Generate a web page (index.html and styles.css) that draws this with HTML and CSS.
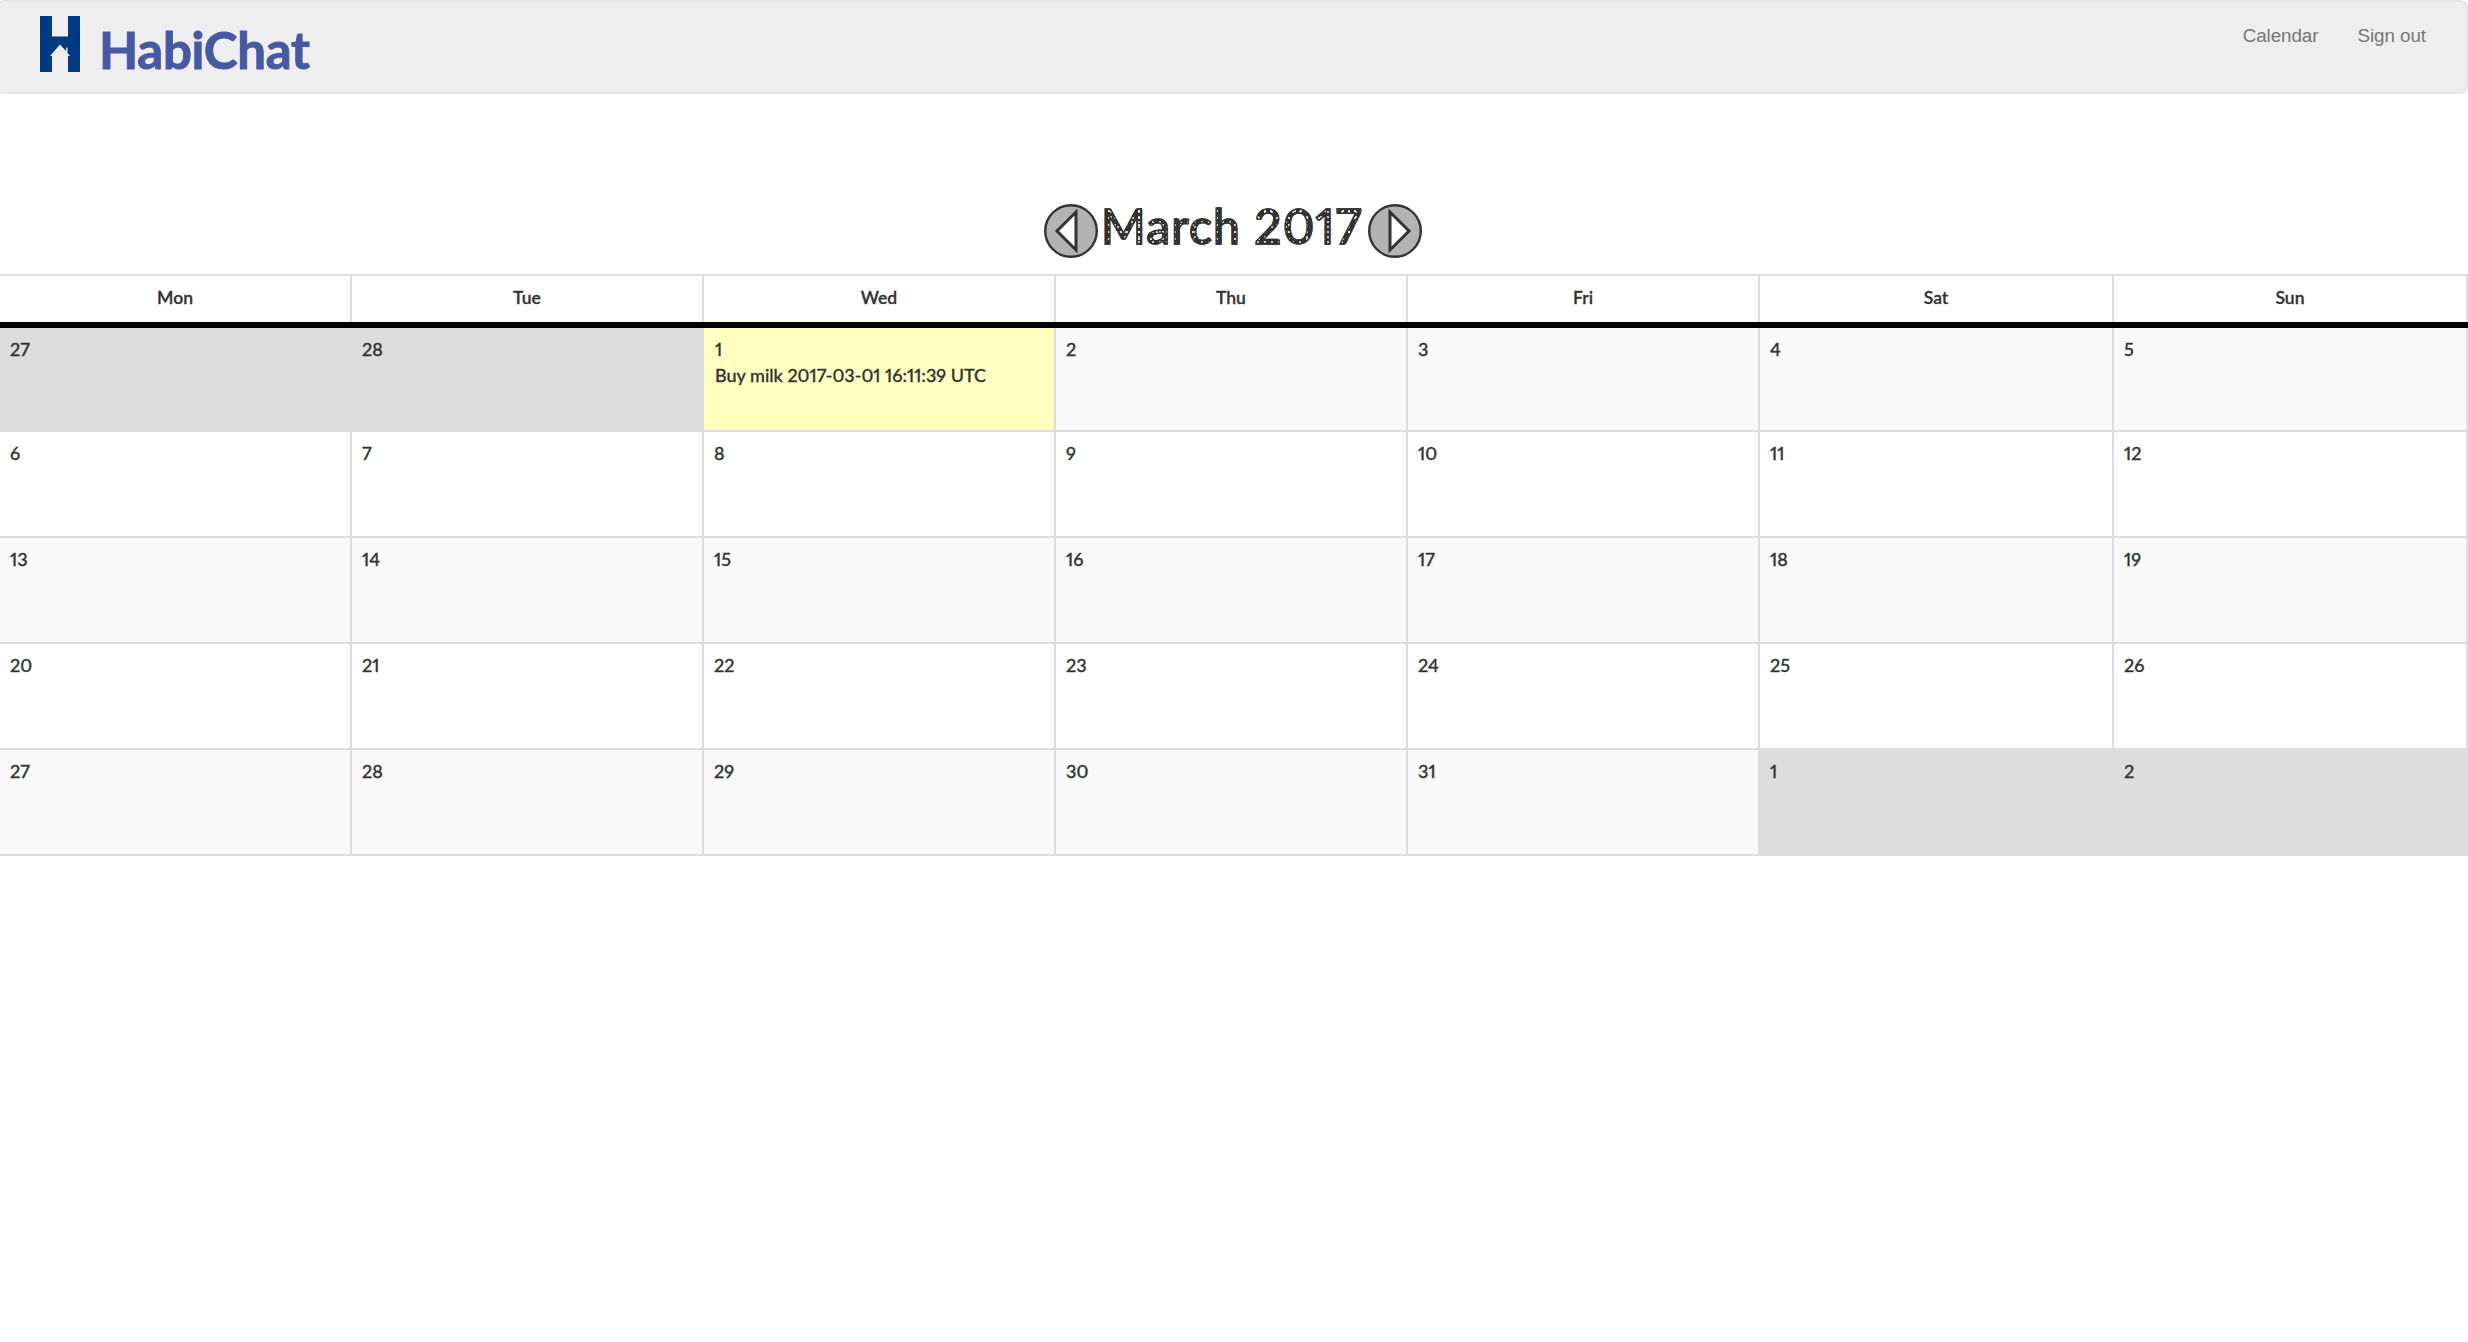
FILE: index.html
```html
<!DOCTYPE html>
<html lang="en">
<head>
<meta charset="utf-8">
<title>HabiChat</title>
<link rel="stylesheet" href="styles.css">
</head>
<body>
<nav class="navbar">
  <a class="brand">
    <svg class="logo" width="40" height="56" viewBox="0 0 40 56"><path fill="#003a80" d="M0 0H12V20.500H28V0H40V56H28V40H30L27.500 37V31.500H26V35L20 28.500L10 40H12V56H0Z"/></svg>
    <span class="brand-name">HabiChat</span>
  </a>
  <div class="links"><a class="calendar-link">Calendar</a><a class="signout-link">Sign out</a></div>
</nav>
<main>
  <header class="month">
    <svg class="arrow" width="54" height="54" viewBox="0 0 54 54"><circle cx="27" cy="27" r="25.800" fill="#b3b3b3" stroke="#333" stroke-width="2.400"/><path d="M32 8V46L13 27Z" fill="#fff" stroke="#333" stroke-width="3"/></svg>
    <h1 class="month-title">March 2017</h1>
    <svg class="arrow" width="54" height="54" viewBox="0 0 54 54"><circle cx="27" cy="27" r="25.800" fill="#b3b3b3" stroke="#333" stroke-width="2.400"/><path d="M22 8V46L41 27Z" fill="#fff" stroke="#333" stroke-width="3"/></svg>
  </header>
  <section class="calendar">
    <div class="week head"><div>Mon</div><div>Tue</div><div>Wed</div><div>Thu</div><div>Fri</div><div>Sat</div><div>Sun</div></div>
    <div class="week odd first"><div class="out"><span>27</span></div><div class="out"><span>28</span></div><div class="today"><span>1</span><p class="event">Buy milk 2017-03-01 16:11:39 UTC</p></div><div><span>2</span></div><div><span>3</span></div><div><span>4</span></div><div><span>5</span></div></div>
    <div class="week"><div><span>6</span></div><div><span>7</span></div><div><span>8</span></div><div><span>9</span></div><div><span>10</span></div><div><span>11</span></div><div><span>12</span></div></div>
    <div class="week odd"><div><span>13</span></div><div><span>14</span></div><div><span>15</span></div><div><span>16</span></div><div><span>17</span></div><div><span>18</span></div><div><span>19</span></div></div>
    <div class="week"><div><span>20</span></div><div><span>21</span></div><div><span>22</span></div><div><span>23</span></div><div><span>24</span></div><div><span>25</span></div><div><span>26</span></div></div>
    <div class="week odd"><div><span>27</span></div><div><span>28</span></div><div><span>29</span></div><div><span>30</span></div><div><span>31</span></div><div class="out"><span>1</span></div><div class="out"><span>2</span></div></div>
  </section>
</main>
</body>
</html>
```

FILE: styles.css
```css
* { box-sizing: border-box; }
body { margin: 0; background: #fff; color: #333; font-family: Lato, sans-serif; font-variant-numeric: proportional-nums; overflow-x: hidden; }
.navbar { height: 94px; background: #eee; border: 2px solid #e7e7e7; border-left: 0; border-radius: 3px 8px 8px 3px; display: flex; justify-content: space-between; padding: 0 40px 0 40px; }
.brand { display: flex; align-items: flex-start; }
.logo { margin-top: 14px; }
.brand-name { margin-left: 19px; margin-top: 17px; font-size: 51px; line-height: 62px; font-weight: 700; color: #4859a3; letter-spacing: -.3px; -webkit-text-stroke: 1px #4859a3; }
.links { display: flex; gap: 39px; padding-top: 22px; font: 18.8px/24px "Liberation Sans", sans-serif; color: #777; }
.calendar-link, .signout-link { letter-spacing: -.05px; }
.month { display: flex; justify-content: center; align-items: flex-start; height: 180px; padding-top: 110px; margin-right: 2px; }
.arrow { flex: none; }
.month-title { margin: -9px 4px 0 3px; width: 263px; white-space: nowrap; font-size: 48px; line-height: 62px; font-weight: 500; letter-spacing: 1.1px; color: transparent; -webkit-text-stroke: 1.3px #333; background: radial-gradient(circle at 2px 2px, #fff .6px, transparent 1.3px) 0 0 / 6px 7px, radial-gradient(circle at 3px 2px, #fff .5px, transparent 1.200px) 0 0 / 7px 5px, #333; -webkit-background-clip: text; background-clip: text; }
.calendar { border-top: 2px solid #ddd; font-size: 18px; font-weight: 500; }
.week { display: grid; grid-template-columns: repeat(5, 352px) 354px 354px; height: 106px; }
.week > div { border-right: 2px solid #ddd; border-bottom: 2px solid #ddd; padding: 8px 9px 0 10px; line-height: 26px; -webkit-text-stroke: .3px #333; }
.head { height: 52px; border-bottom: 6px solid #000; }
.week.head > div { border-bottom: 0; padding: 9px 0 0; text-align: center; font-weight: 600; font-size: 17.5px; }
.first { height: 104px; }
.odd > div { background: #f9f9f9; }
.week > .out { background: #ddd; }
.week > .today { background: #ffffc0; padding-left: 11px; }
.event { margin: 0; white-space: nowrap; }
```
